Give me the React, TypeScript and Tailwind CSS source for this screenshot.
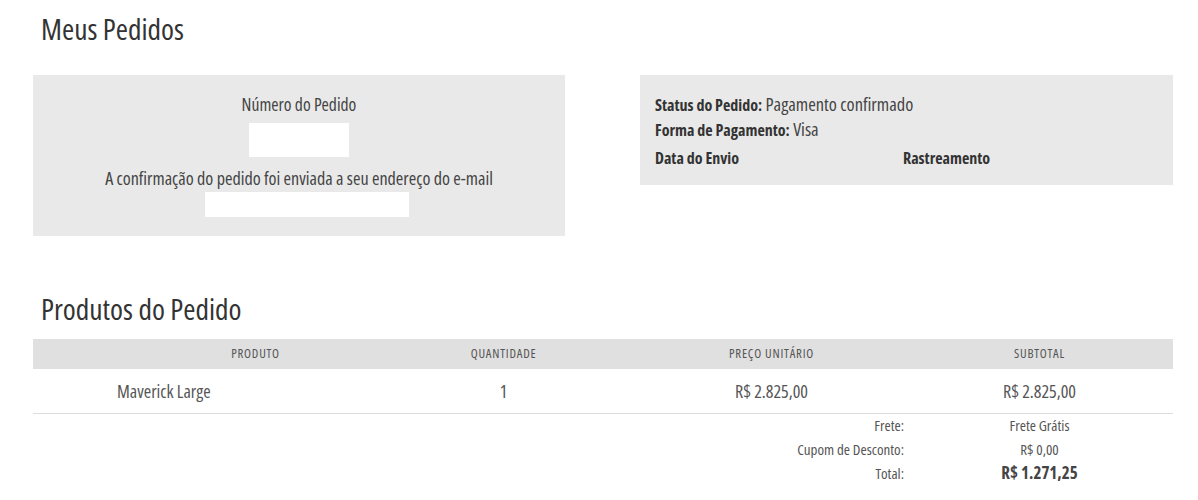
export default function App() {
  const font = { fontFamily: '"Open Sans", "DejaVu Sans Condensed", sans-serif' };
  return (
    <main className="min-h-screen bg-white text-[#444] pl-[33px] pr-[25px] font-stretch-[75%]" style={font}>
      {/* Header */}
      <h1 className="pt-[11px] pl-[8px] text-[29.5px] leading-[36px] text-[#333]">Meus Pedidos</h1>

      <div className="mt-[28px] flex justify-between items-start">
        {/* Order number box */}
        <div className="w-[532px] h-[161px] bg-[#e9e9e9] flex flex-col items-center pt-[19px]">
          <p className="text-[17.6px] leading-[20px]">Número do Pedido</p>
          <div className="mt-[9px] w-[100px] h-[34px] bg-white" />
          <p className="mt-[11px] text-[18.1px] leading-[20px]">A confirmação do pedido foi enviada a seu endereço do e-mail</p>
          <div className="mt-[4px] ml-[16px] w-[204px] h-[25px] bg-white" />
        </div>

        {/* Status box */}
        <div className="w-[533px] h-[110px] bg-[#e9e9e9] pl-[15px] pt-[16px] text-[18.4px]">
          <p className="leading-[25px]"><span className="font-bold text-[#333] text-[16px] leading-none">Status do Pedido:</span> Pagamento confirmado</p>
          <p className="leading-[25px]"><span className="font-bold text-[#333] text-[16px] leading-none">Forma de Pagamento:</span> Visa</p>
          <div className="flex mt-[5px] leading-[25px] font-bold text-[#333] text-[16px]">
            <span className="w-[248px]">Data do Envio</span>
            <span>Rastreamento</span>
          </div>
        </div>
      </div>

      <h2 className="mt-[55px] pl-[8px] text-[29.5px] leading-[36px] text-[#333]">Produtos do Pedido</h2>

      {/* Table */}
      <div className="mt-[12px]">
        <div className="grid grid-cols-[337px_267px_269px_267px] h-[30px] items-center bg-[#e0e0e0] text-[12.8px] tracking-[0.06em] text-[#555]">
          <span className="text-center pl-[108px]">PRODUTO</span>
          <span className="text-center">QUANTIDADE</span>
          <span className="text-center">PREÇO UNITÁRIO</span>
          <span className="text-center">SUBTOTAL</span>
        </div>
        <div className="grid grid-cols-[337px_267px_269px_267px] h-[45px] items-center border-b border-[#ddd] text-[18px] text-[#555]">
          <span className="pl-[84px]">Maverick Large</span>
          <span className="text-center">1</span>
          <span className="text-center">R$ 2.825,00</span>
          <span className="text-center">R$ 2.825,00</span>
        </div>
        <div className="grid grid-cols-[873px_267px] -mt-[1px] text-[15px] text-[#555]">
          <span className="text-right pr-[2px] leading-[24px]">Frete:</span>
          <span className="text-center leading-[24px]">Frete Grátis</span>
          <span className="text-right pr-[2px] leading-[24px]">Cupom de Desconto:</span>
          <span className="text-center leading-[24px]">R$ 0,00</span>
          <span className="text-right pr-[2px] leading-[24px]">Total:</span>
          <span className="text-center leading-[24px] text-[17px] font-bold text-[#444]">R$ 1.271,25</span>
        </div>
      </div>
    </main>
  );
}
